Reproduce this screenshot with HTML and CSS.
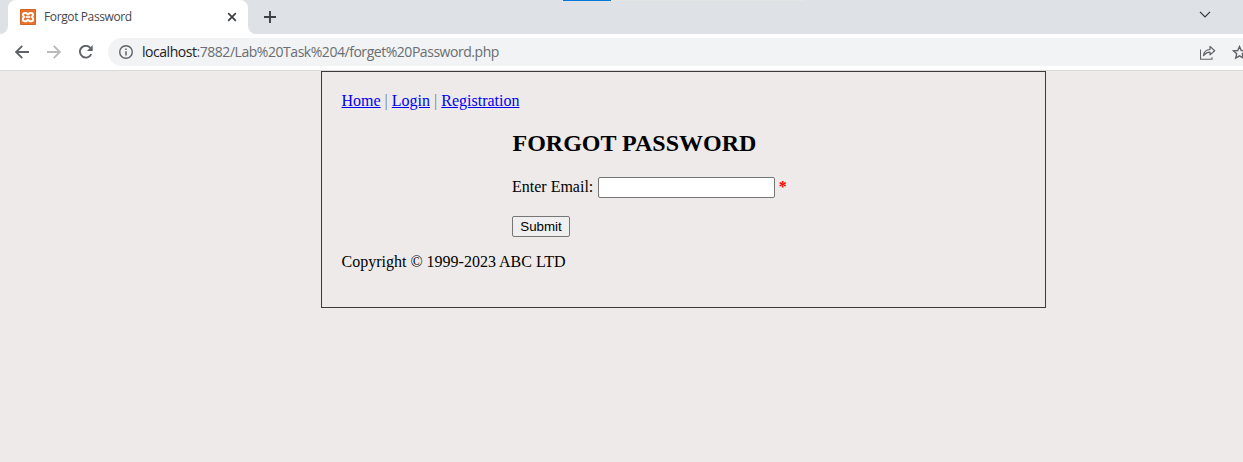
FILE: index.html
```html
<!DOCTYPE html>
<html lang="en">
<head>
<meta charset="utf-8">
<title>Forgot Password</title>
<link rel="stylesheet" href="styles.css">
</head>
<body>
<header class="tabstrip">
  <div class="tab">
    <svg class="tab-curve left" width="8" height="8" viewBox="0 0 8 8"><path d="M8 0v8H0a8 8 0 0 0 8-8z" fill="#fff"/></svg>
    <svg class="favicon" width="16" height="16" viewBox="0 0 16 16">
      <rect width="16" height="16" rx="1" fill="#e9722a"/>
      <rect x=".5" y=".5" width="15" height="15" rx="1" fill="none" stroke="#cf6424"/>
      <path d="M5 3.900h1.200L8 5.500l1.800-1.600H11c1.400 0 2 .8 2 1.800 0 .9-.5 1.500-1.100 2.200.8.6 1.300 1.300 1.300 2.400 0 1.300-.8 2-2.100 2H9.700L8 10.700l-1.700 1.600H4.900c-1.300 0-2.100-.7-2.100-2 0-1.100.5-1.800 1.300-2.400C3.500 7.200 3 6.600 3 5.700c0-1 .6-1.800 2-1.800z" fill="#e9722a" stroke="#fff" stroke-width="2" stroke-linejoin="round"/>
      <path d="M5.700 8h4.600" stroke="#fff" stroke-width="1.700"/>
    </svg>
    <span class="tab-title">Forgot Password</span>
    <svg class="close" width="10" height="10" viewBox="0 0 10 10"><path d="M1.200 1.200l7.600 7.600M8.800 1.200L1.200 8.800" stroke="#3c4043" stroke-width="1.700"/></svg>
    <svg class="tab-curve right" width="8" height="8" viewBox="0 0 8 8"><path d="M0 0v8h8a8 8 0 0 1-8-8z" fill="#fff"/></svg>
  </div>
  <svg class="new-tab" width="12" height="12" viewBox="0 0 12 12"><path d="M6 0v12M0 6h12" stroke="#3c4043" stroke-width="1.900"/></svg>
  <svg class="chevron" width="12" height="7" viewBox="0 0 12 7"><path d="M1 .8l5 5 5-5" fill="none" stroke="#303236" stroke-width="1.200"/></svg>
  <div class="loading"><div class="loading-value"></div></div>
</header>
<nav class="toolbar">
  <svg class="back" width="14" height="14" viewBox="0 0 14 14"><path d="M14 7H1.400M7.300.8L1.100 7l6.200 6.200" fill="none" stroke="#5f6368" stroke-width="1.800"/></svg>
  <svg class="forward" width="14" height="14" viewBox="0 0 14 14"><path d="M0 7h12.600M6.700.8L12.900 7l-6.200 6.200" fill="none" stroke="#bababc" stroke-width="1.800"/></svg>
  <svg class="reload" width="14" height="14" viewBox="0 0 14 14"><path d="M12.200 9.100A5.900 5.900 0 1 1 11.400 3" fill="none" stroke="#5f6368" stroke-width="1.900"/><path d="M13.700 0v6H7.900z" fill="#5f6368"/></svg>
  <div class="address">
    <svg class="info" width="14" height="14" viewBox="0 0 14 14"><circle cx="7" cy="7" r="6.300" fill="none" stroke="#5f6368" stroke-width="1.400"/><path d="M7 6.200v4.300M7 3.500v1.500" stroke="#5f6368" stroke-width="1.500"/></svg>
    <span class="url"><span class="host">localhost</span>:7882/Lab%20Task%204/forget%20Password.php</span>
    <svg class="share" width="16" height="15" viewBox="0 0 16 15"><path d="M.5 4.500v9.700h11.500v-2" fill="none" stroke="#5f6368" stroke-width="1.100"/><path d="M3.500 10.500c.3-3.500 2.500-5.700 6.500-6V1.400l4.700 4.300L10 9.900V7.200c-2.700 0-4.300.9-6.500 3.300z" fill="none" stroke="#5f6368" stroke-width="1.200" stroke-linejoin="round"/></svg>
    <svg class="star" width="15" height="15" viewBox="0 0 15 15"><path d="M7.500 1.500l1.800 4 4.300.4-3.300 2.900 1 4.300-3.800-2.300-3.800 2.300 1-4.300L1.400 5.900l4.300-.4z" fill="none" stroke="#5f6368" stroke-width="1.400"/></svg>
  </div>
</nav>
<main class="page">
  <section class="panel">
    <div class="links"><a href="#">Home</a> | <a href="#">Login</a> | <a href="#">Registration</a></div>
    <form class="form">
      <h2 class="heading">FORGOT PASSWORD</h2>
      <div class="field"><label class="label" for="email">Enter Email:</label><input class="email" id="email" type="text"><span class="required">*</span></div>
      <button class="submit" type="button">Submit</button>
    </form>
    <footer class="copyright">Copyright © 1999-2023 ABC LTD</footer>
  </section>
</main>
</body>
</html>
```

FILE: styles.css
```css
* { box-sizing: border-box; }
html, body { height: 100%; }
body {
  margin: 0;
  display: flex;
  flex-direction: column;
  overflow: hidden;
  background: #eeeae9;
}
svg { display: block; flex: none; }

.tabstrip {
  position: relative;
  flex: none;
  display: flex;
  align-items: center;
  height: 34px;
  padding: 0 32px 0 8px;
  background: #dee1e6;
}
.tab {
  position: relative;
  display: flex;
  align-items: center;
  width: 240px;
  height: 34px;
  padding: 0 11px 0 12px;
  border-radius: 8px 8px 0 0;
  background: #fff;
}
.tab-curve { position: absolute; bottom: 0; }
.tab-curve.left { left: -8px; }
.tab-curve.right { right: -8px; }
.tab-title {
  flex: 1;
  margin-left: 8px;
  font: 12px/16px "Open Sans", sans-serif;
  letter-spacing: -0.38px;
  color: #45474a;
  white-space: nowrap;
}
.new-tab { margin-left: 16px; }
.chevron { margin: -6px 0 0 auto; }
.loading {
  position: absolute;
  top: 0;
  left: 563px;
  width: 241px;
  height: 1px;
  background: #e5e5e5;
}
.loading-value { width: 48px; height: 1px; background: #0078d7; }

.toolbar {
  flex: none;
  display: flex;
  align-items: center;
  height: 37px;
  padding-left: 15px;
  border-bottom: 1px solid #dadada;
  background: #fff;
}
.forward { margin-left: 18px; }
.reload { margin-left: 18px; }
.address {
  flex: 1;
  display: flex;
  align-items: center;
  height: 28px;
  margin-left: 15px;
  padding-left: 11px;
  border-radius: 14px 0 0 14px;
  background: #f1f3f4;
  overflow: hidden;
}
.url {
  margin-left: 9px;
  font: 14px/20px "Open Sans", sans-serif;
  letter-spacing: -0.46px;
  color: #6a6d71;
  white-space: nowrap;
}
.host { color: #202124; }
.share { margin-left: auto; }
.star { margin: 0 -4px 0 16px; }

.page {
  flex: 1;
  font: 16px/18px "Liberation Serif", serif;
  color: #000;
}
.panel {
  width: 725px;
  height: 237px;
  margin-left: 321px;
  padding: 20px 19.500px;
  border: 1px solid #3c3a3a;
}
.links a { color: #0000ee; text-decoration: underline; }
.links { color: #6f7f86; }
.form { margin-left: 170.500px; }
.heading {
  margin: 20px 0 20px 0.500px;
  font-size: 24px;
  line-height: 27px;
  font-weight: bold;
}
.field { display: flex; align-items: center; height: 21px; }
.label { padding-bottom: 2px; }
.email {
  width: 177px;
  height: 21px;
  margin: 0 3.500px 0 5px;
  border: 1px solid #767676;
  border-radius: 2px;
  background: #fff;
}
.required { padding-bottom: 2px; color: #f00; font-weight: bold; }
.submit {
  display: block;
  width: 58px;
  height: 21px;
  margin-top: 18px;
  padding: 0;
  border: 1px solid #767676;
  border-radius: 2px;
  background: #efefef;
  font: 13.333px/15px "Liberation Sans", sans-serif;
  color: #000;
}
.copyright { margin-top: 16px; }
```
